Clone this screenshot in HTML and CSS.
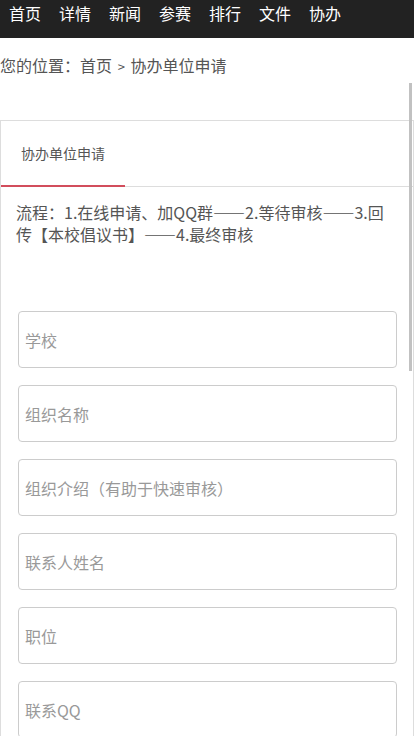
FILE: index.html
```html
<!DOCTYPE html>
<html lang="zh-cn">
  <head>
    <meta charset="utf-8">
    <meta name="viewport" content="width=device-width">
    <title>协办单位申请</title>
    <link rel="stylesheet" href="styles.css">
  </head>

<body>
    <!-- top menu -->
    <ul class="nav">
      <li><a href="#">首页</a></li>
      <li><a href="#">详情</a></li>
      <li><a href="#">新闻</a></li>
      <li><a href="#">参赛</a></li>
      <li><a href="#">排行</a></li>
      <li><a href="#">文件</a></li>
      <li><a href="#">协办</a></li>
    </ul>

    <p class="crumb">您的位置：<a href="#">首页</a> <span class="sep">&gt;</span> 协办单位申请</p>

    <div class="panel">
      <div class="tabs">
        <span class="tab active">协办单位申请</span>
      </div>

      <p class="flow">流程：1.在线申请、加QQ群——2.等待审核——3.回传【本校倡议书】——4.最终审核</p>

      <form class="apply">
        <input class="field" type="text" name="school" placeholder="学校">
        <input class="field" type="text" name="org" placeholder="组织名称">
        <input class="field" type="text" name="intro" placeholder="组织介绍（有助于快速审核）">
        <input class="field" type="text" name="contact" placeholder="联系人姓名">
        <input class="field" type="text" name="job" placeholder="职位">
        <input class="field" type="text" name="qq" placeholder="联系QQ">
      </form>

      <div class="thumb"></div>
    </div>
</body>

</html>
```

FILE: styles.css
```css
body {
  margin: 0;
  font-family: "Noto Sans CJK SC", "Liberation Sans", sans-serif;
  font-size: 16px;
  color: #555;
  background: #fff;
  overflow: hidden;
}

a {
  color: inherit;
  text-decoration: none;
}

/* top menu */
.nav {
  display: flex;
  margin: 0;
  padding: 0;
  height: 38px;
  list-style: none;
  background-color: #222;
}

.nav li a {
  display: block;
  padding: 0 9px;
  line-height: 27px;
  color: #fff;
}

.crumb {
  margin: 16px 0 0;
  line-height: 22px;
}

.crumb .sep {
  font-size: 13px;
  padding: 0 2px;
}

/* panel with tab */
.panel {
  position: relative;
  margin-top: 42px;
  border: 1px solid #ddd;
  border-bottom: none;
  min-height: 700px;
}

.tabs {
  display: flex;
  height: 65px;
  border-bottom: 1px solid #ddd;
}

.tab {
  width: 124px;
  box-sizing: border-box;
  padding-left: 20px;
  font-size: 14px;
  line-height: 65px;
  color: #555;
}

.tab.active {
  border-bottom: 2px solid #d24d5c;
  margin-bottom: -1px;
  height: 66px;
  box-sizing: border-box;
}

.flow {
  margin: 0;
  padding: 14px 16px 0 15px;
  line-height: 22px;
}

.apply {
  display: flex;
  flex-direction: column;
  gap: 17px;
  padding: 66px 16px 0 17px;
}

.field {
  height: 57px;
  width: 100%;
  box-sizing: border-box;
  padding: 0 6px;
  border: 1px solid #ccc;
  border-radius: 4px;
  font-family: inherit;
  font-size: 16px;
  color: #555;
}

.field::placeholder {
  color: #999;
}

/* fake scroll indicator */
.thumb {
  position: absolute;
  right: 1px;
  top: -38px;
  width: 3px;
  height: 288px;
  background: #c1c1c1;
}
```
